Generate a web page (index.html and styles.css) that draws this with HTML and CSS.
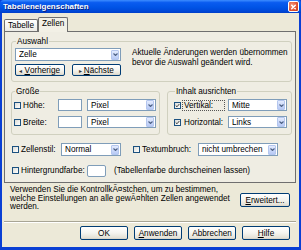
FILE: index.html
```html
<!DOCTYPE html>
<html lang="de">
<head>
<meta charset="utf-8">
<title>Tabelleneigenschaften</title>
<link rel="stylesheet" href="styles.css">
</head>
<body>
<div class="window">
  <div class="titlebar">
    <span class="title">Tabelleneigenschaften</span>
    <span class="close"><svg viewBox="0 0 10 10" width="10" height="10"><path d="M3 3 L7 7 M7 3 L3 7" stroke="#fff" stroke-width="1.6" stroke-linecap="round"/></svg></span>
  </div>
  <div class="client">
    <div class="tabs">
      <div class="tab">Tabelle</div>
      <div class="tab active">Zellen</div>
    </div>
    <div class="panel">
      <fieldset class="group auswahl">
        <legend>Auswahl</legend>
        <div class="auswahl-body">
          <div class="auswahl-left">
            <div class="select w-zelle"><span class="val">Zelle</span><span class="arrow"><svg viewBox="0 0 5 3" width="5" height="3"><path d="M0.5 0.5 L2.5 2.5 L4.5 0.5" fill="none" stroke="#4d6185" stroke-width="1.1"/></svg></span></div>
            <div class="navbtns">
              <button class="btn nav"><span class="tri">&#9666;</span><u>V</u>orherige</button>
              <button class="btn nav"><span class="tri">&#9656;</span><u>N</u>ächste</button>
            </div>
          </div>
          <p class="hint">Aktuelle Änderungen werden übernommen<br>bevor die Auswahl geändert wird.</p>
        </div>
      </fieldset>

      <div class="groups">
        <fieldset class="group groesse">
          <legend>Größe</legend>
          <div class="frow">
            <span class="cb"></span><span class="lbl w-hb">Höhe:</span>
            <span class="input w-num"></span>
            <div class="select w-pixel"><span class="val">Pixel</span><span class="arrow"><svg viewBox="0 0 5 3" width="5" height="3"><path d="M0.5 0.5 L2.5 2.5 L4.5 0.5" fill="none" stroke="#4d6185" stroke-width="1.1"/></svg></span></div>
          </div>
          <div class="frow">
            <span class="cb"></span><span class="lbl w-hb">Breite:</span>
            <span class="input w-num"></span>
            <div class="select w-pixel"><span class="val">Pixel</span><span class="arrow"><svg viewBox="0 0 5 3" width="5" height="3"><path d="M0.5 0.5 L2.5 2.5 L4.5 0.5" fill="none" stroke="#4d6185" stroke-width="1.1"/></svg></span></div>
          </div>
        </fieldset>
        <fieldset class="group inhalt">
          <legend>Inhalt ausrichten</legend>
          <div class="frow">
            <span class="cb checked"><svg viewBox="0 0 7 7" width="5" height="5"><path d="M1 3.5 L2.8 5.3 L6 1.5" fill="none" stroke="#222" stroke-width="1.2"/></svg></span><span class="lbl w-va focus">Vertikal:</span>
            <div class="select w-align"><span class="val">Mitte</span><span class="arrow"><svg viewBox="0 0 5 3" width="5" height="3"><path d="M0.5 0.5 L2.5 2.5 L4.5 0.5" fill="none" stroke="#4d6185" stroke-width="1.1"/></svg></span></div>
          </div>
          <div class="frow">
            <span class="cb checked"><svg viewBox="0 0 7 7" width="5" height="5"><path d="M1 3.5 L2.8 5.3 L6 1.5" fill="none" stroke="#222" stroke-width="1.2"/></svg></span><span class="lbl w-va">Horizontal:</span>
            <div class="select w-align"><span class="val">Links</span><span class="arrow"><svg viewBox="0 0 5 3" width="5" height="3"><path d="M0.5 0.5 L2.5 2.5 L4.5 0.5" fill="none" stroke="#4d6185" stroke-width="1.1"/></svg></span></div>
          </div>
        </fieldset>
      </div>

      <div class="prow">
        <span class="cb"></span><span class="lbl w-zs">Zellenstil:</span>
        <div class="select w-normal"><span class="val">Normal</span><span class="arrow"><svg viewBox="0 0 5 3" width="5" height="3"><path d="M0.5 0.5 L2.5 2.5 L4.5 0.5" fill="none" stroke="#4d6185" stroke-width="1.1"/></svg></span></div>
        <span class="cb gap-cb"></span><span class="lbl w-tu">Textumbruch:</span>
        <div class="select w-umbr"><span class="val">nicht umbrechen</span><span class="arrow"><svg viewBox="0 0 5 3" width="5" height="3"><path d="M0.5 0.5 L2.5 2.5 L4.5 0.5" fill="none" stroke="#4d6185" stroke-width="1.1"/></svg></span></div>
      </div>

      <div class="prow">
        <span class="cb"></span><span class="lbl w-hg">Hintergrundfarbe:</span>
        <span class="input w-color"></span>
        <span class="note">(Tabellenfarbe durchscheinen lassen)</span>
      </div>
    </div>

    <div class="info">
      <p class="infotext">Verwenden Sie die KontrollkÃ¤stchen, um zu bestimmen,<br>welche Einstellungen an alle gewÃ¤hlten Zellen angewendet<br>werden.</p>
      <button class="btn w-erw"><u>E</u>rweitert...</button>
    </div>

    <div class="footer">
      <button class="btn w-foot">OK</button>
      <button class="btn w-foot"><u>A</u>nwenden</button>
      <button class="btn w-foot">Abbrechen</button>
      <button class="btn w-foot"><u>H</u>ilfe</button>
    </div>
  </div>
</div>
</body>
</html>
```

FILE: styles.css
```css
* { box-sizing: border-box; }
html, body { margin: 0; padding: 0; }
body {
  width: 301px;
  height: 250px;
  overflow: hidden;
  font-family: "Liberation Sans", Arial, sans-serif;
  font-size: 8.2px;
  color: #000;
  background: #fff;
}
.window {
  width: 301px;
  height: 250px;
  display: flex;
  flex-direction: column;
  background: #0a3fd4;
}
.titlebar {
  height: 13px;
  flex: none;
  display: flex;
  align-items: center;
  justify-content: space-between;
  padding: 0 2px 0 3px;
  background: linear-gradient(#3d8dff 0%, #0a5cf0 20%, #0054e6 55%, #0048d8 85%, #003ec8 100%);
  border-radius: 4px 4px 0 0;
}
.title {
  color: #fff;
  font-weight: bold;
  font-size: 8px;
  text-shadow: 1px 1px 0 #0a1e7a;
  letter-spacing: 0;
}
.close {
  width: 11px;
  height: 11px;
  display: flex;
  align-items: center;
  justify-content: center;
  background: radial-gradient(circle at 35% 35%, #f29a7e, #e0502f 60%, #c03a1a);
  border: 1px solid #fff;
  border-radius: 2px;
}
.client {
  flex: 1;
  margin: 0 2px 3px 2px;
  background: #ece9d8;
  padding: 5px 3px 0 2px;
  display: flex;
  flex-direction: column;
}
.tabs {
  height: 13px;
  display: flex;
  align-items: flex-end;
  padding-left: 0;
}
.tab {
  height: 12px;
  padding: 0 3px;
  line-height: 11px;
  border: 1px solid #6f6f6f;
  border-bottom: none;
  background: linear-gradient(#ffffff, #ecebe6);
  border-radius: 2px 2px 0 0;
}
.tab.active {
  height: 15px;
  margin-bottom: -1px;
  position: relative;
  z-index: 1;
  background: #f2f0e6;
  line-height: 12px;
}
.panel {
  height: 152px;
  border: 1px solid #6f6f6f;
  background: #efede3;
  padding: 5px 3px 0 6px;
}
.group {
  margin: 0;
  padding: 0 4px 5px 3px;
  border: 1px solid #d0d0bf;
  border-radius: 3px;
  min-width: 0;
}
.group legend {
  padding: 0 1px;
  margin-left: 1px;
  line-height: 9px;
  font-size: 8.2px;
}
.auswahl-body {
  display: flex;
  padding-top: 2px;
}
.auswahl-left {
  display: flex;
  flex-direction: column;
  gap: 3px;
  width: 106px;
  flex: none;
}
.navbtns {
  display: flex;
  gap: 7px;
}
.hint {
  margin: 0 0 0 11px;
  line-height: 10px;
  padding-top: 0;
  white-space: nowrap;
}
.select {
  height: 13px;
  display: flex;
  align-items: center;
  background: #fff;
  border: 1px solid #7f9db9;
  padding: 0 1px 0 3px;
}
.select .val { flex: 1; white-space: nowrap; overflow: hidden; }
.arrow {
  width: 8px;
  height: 10px;
  flex: none;
  display: flex;
  align-items: center;
  justify-content: center;
  background: linear-gradient(#e3ebfe, #b7c9f5);
  border: 1px solid #b4c6ee;
  border-radius: 1px;
}
.w-zelle { width: 106px; }
.w-pixel { width: 69px; height: 12px; }
.w-align { width: 59px; height: 12px; }
.w-normal { width: 60px; }
.w-umbr { width: 80px; }
.btn {
  font: inherit;
  color: #000;
  margin: 0;
  padding: 0;
  border: 1px solid #003c74;
  border-radius: 2px;
  background: linear-gradient(#ffffff 0%, #f5f4ef 50%, #e4e1d6 90%, #d6d0c5 100%);
  display: flex;
  align-items: center;
  justify-content: center;
  white-space: nowrap;
}
.btn u { text-decoration: underline; }
.nav { width: 50px; height: 12px; }
.tri { font-size: 6px; margin-right: 2px; color: #333; }
.groups {
  display: flex;
  gap: 7px;
  margin-top: 5px;
}
.groesse { width: 149px; padding: 3px 3px 6px 2px; }
.inhalt { width: 125px; padding: 3px 3px 6px 6px; }
.frow {
  display: flex;
  align-items: center;
  height: 12px;
}
.frow + .frow { margin-top: 5px; }
.cb {
  width: 7px;
  height: 7px;
  flex: none;
  border: 1px solid #1c5180;
  background: linear-gradient(135deg, #dcdcd7, #ffffff);
  display: inline-flex;
  align-items: center;
  justify-content: center;
}
.lbl { margin-left: 2px; white-space: nowrap; flex: none; }
.w-hb { width: 35px; }
.w-va { width: 41px; margin-right: 4px; padding-left: 1px; }
.focus { outline: 1px dotted #555; outline-offset: 0; }
.input {
  display: inline-block;
  height: 12px;
  background: #fff;
  border: 1px solid #7f9db9;
  flex: none;
}
.w-num { width: 24px; margin-right: 5px; }
.w-color { width: 19px; border-radius: 2px; margin-right: 8px; }
.prow {
  display: flex;
  align-items: center;
  height: 13px;
  margin-top: 8px;
  padding-left: 1px;
}
.w-zs { width: 40px; }
.gap-cb { margin-left: 12px; }
.w-tu { width: 56px; }
.w-hg { width: 66px; }
.note { white-space: nowrap; }
.info {
  display: flex;
  align-items: flex-start;
  padding: 3px 6px 0 6px;
  height: 38px;
}
.infotext {
  flex: 1;
  margin: 0;
  line-height: 8.5px;
  white-space: nowrap;
}
.w-erw { width: 50px; height: 14px; margin-top: 7px; }
.footer {
  border-top: 1px solid #a8a595;
  box-shadow: inset 0 1px 0 #fff;
  display: flex;
  justify-content: flex-end;
  gap: 6px;
  padding: 4px 6px 0 0;
}
.w-foot { width: 48px; height: 14px; }
```
